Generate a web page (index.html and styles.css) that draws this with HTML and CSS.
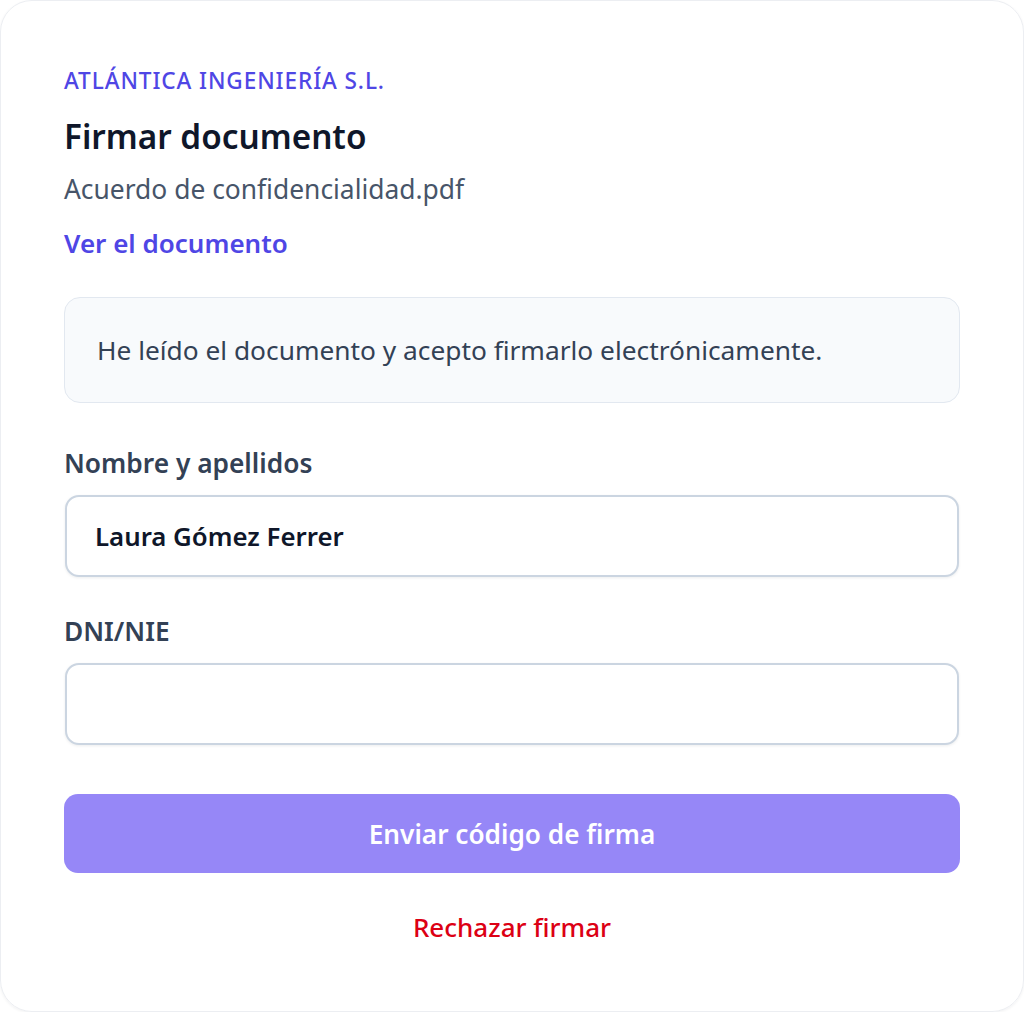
FILE: index.html
```html
<!DOCTYPE html>
<html lang="es">
<head>
<meta charset="utf-8">
<title>Firmar documento</title>
<link rel="stylesheet" href="styles.css">
</head>
<body>
<main class="card">
  <p class="company">ATLÁNTICA INGENIERÍA S.L.</p>
  <h1 class="title">Firmar documento</h1>
  <p class="filename">Acuerdo de confidencialidad.pdf</p>
  <a class="doc-link" href="#">Ver el documento</a>
  <div class="consent">He leído el documento y acepto firmarlo electrónicamente.</div>
  <label class="field-label" for="nombre">Nombre y apellidos</label>
  <input class="field-input" id="nombre" type="text" value="Laura Gómez Ferrer">
  <label class="field-label field-label--second" for="dni">DNI/NIE</label>
  <input class="field-input" id="dni" type="text" value="">
  <button class="submit" type="button">Enviar código de firma</button>
  <a class="reject" href="#">Rechazar firmar</a>
</main>
</body>
</html>
```
FILE: styles.css
```css
* { box-sizing: border-box; }
html, body { margin: 0; padding: 0; background: #ffffff; }
body {
  font-family: "Noto Sans", "Open Sans", sans-serif;
  width: 1024px;
  height: 1012px;
  overflow: hidden;
}
.card {
  width: 1024px;
  height: 1012px;
  border: 1px solid #eceef2;
  border-radius: 32px;
  box-shadow: 0 1px 3px rgba(15, 23, 42, 0.06);
  padding: 65px 63px 0 63px;
  display: flex;
  flex-direction: column;
  align-items: stretch;
}
.company {
  margin: 0;
  font-size: 22.6px;
  line-height: 30px;
  font-weight: 500;
  letter-spacing: 0.9px;
  color: #4f46e5;
}
.title {
  margin: 20px 0 0;
  font-size: 33.3px;
  line-height: 40px;
  font-weight: 600;
  color: #0f172a;
}
.filename {
  margin: 15px 0 0;
  font-size: 26.4px;
  line-height: 36px;
  font-weight: 400;
  color: #475569;
}
.doc-link {
  margin-top: 18px;
  align-self: flex-start;
  font-size: 26px;
  line-height: 36px;
  font-weight: 600;
  color: #4f46e5;
  text-decoration: none;
}
.consent {
  margin-top: 36px;
  height: 106px;
  display: flex;
  align-items: center;
  padding: 0 32px;
  background: #f8fafc;
  border: 1.5px solid #e2e8f0;
  border-radius: 16px;
  font-size: 26.3px;
  color: #334155;
}
.field-label {
  display: block;
  margin-top: 44px;
  font-size: 26.3px;
  line-height: 32px;
  font-weight: 600;
  color: #334155;
}
.field-label--second { margin-top: 38px; }
.field-input {
  margin: 16px 1px 0;
  height: 82px;
  padding: 0 28px;
  border: 2px solid #cbd5e1;
  border-radius: 14px;
  box-shadow: 0 1px 3px rgba(15, 23, 42, 0.08);
  background: #ffffff;
  font-family: inherit;
  font-size: 25.8px;
  font-weight: 600;
  color: #0f172a;
  outline: none;
}
.submit {
  margin: 49px 0 0;
  height: 79px;
  border: none;
  border-radius: 14px;
  background: #9687f7;
  color: #ffffff;
  font-family: inherit;
  font-size: 26.2px;
  font-weight: 600;
  cursor: default;
}
.reject {
  margin-top: 36px;
  align-self: center;
  font-size: 26px;
  line-height: 36px;
  font-weight: 500;
  color: #dc0014;
  text-decoration: none;
}
```
